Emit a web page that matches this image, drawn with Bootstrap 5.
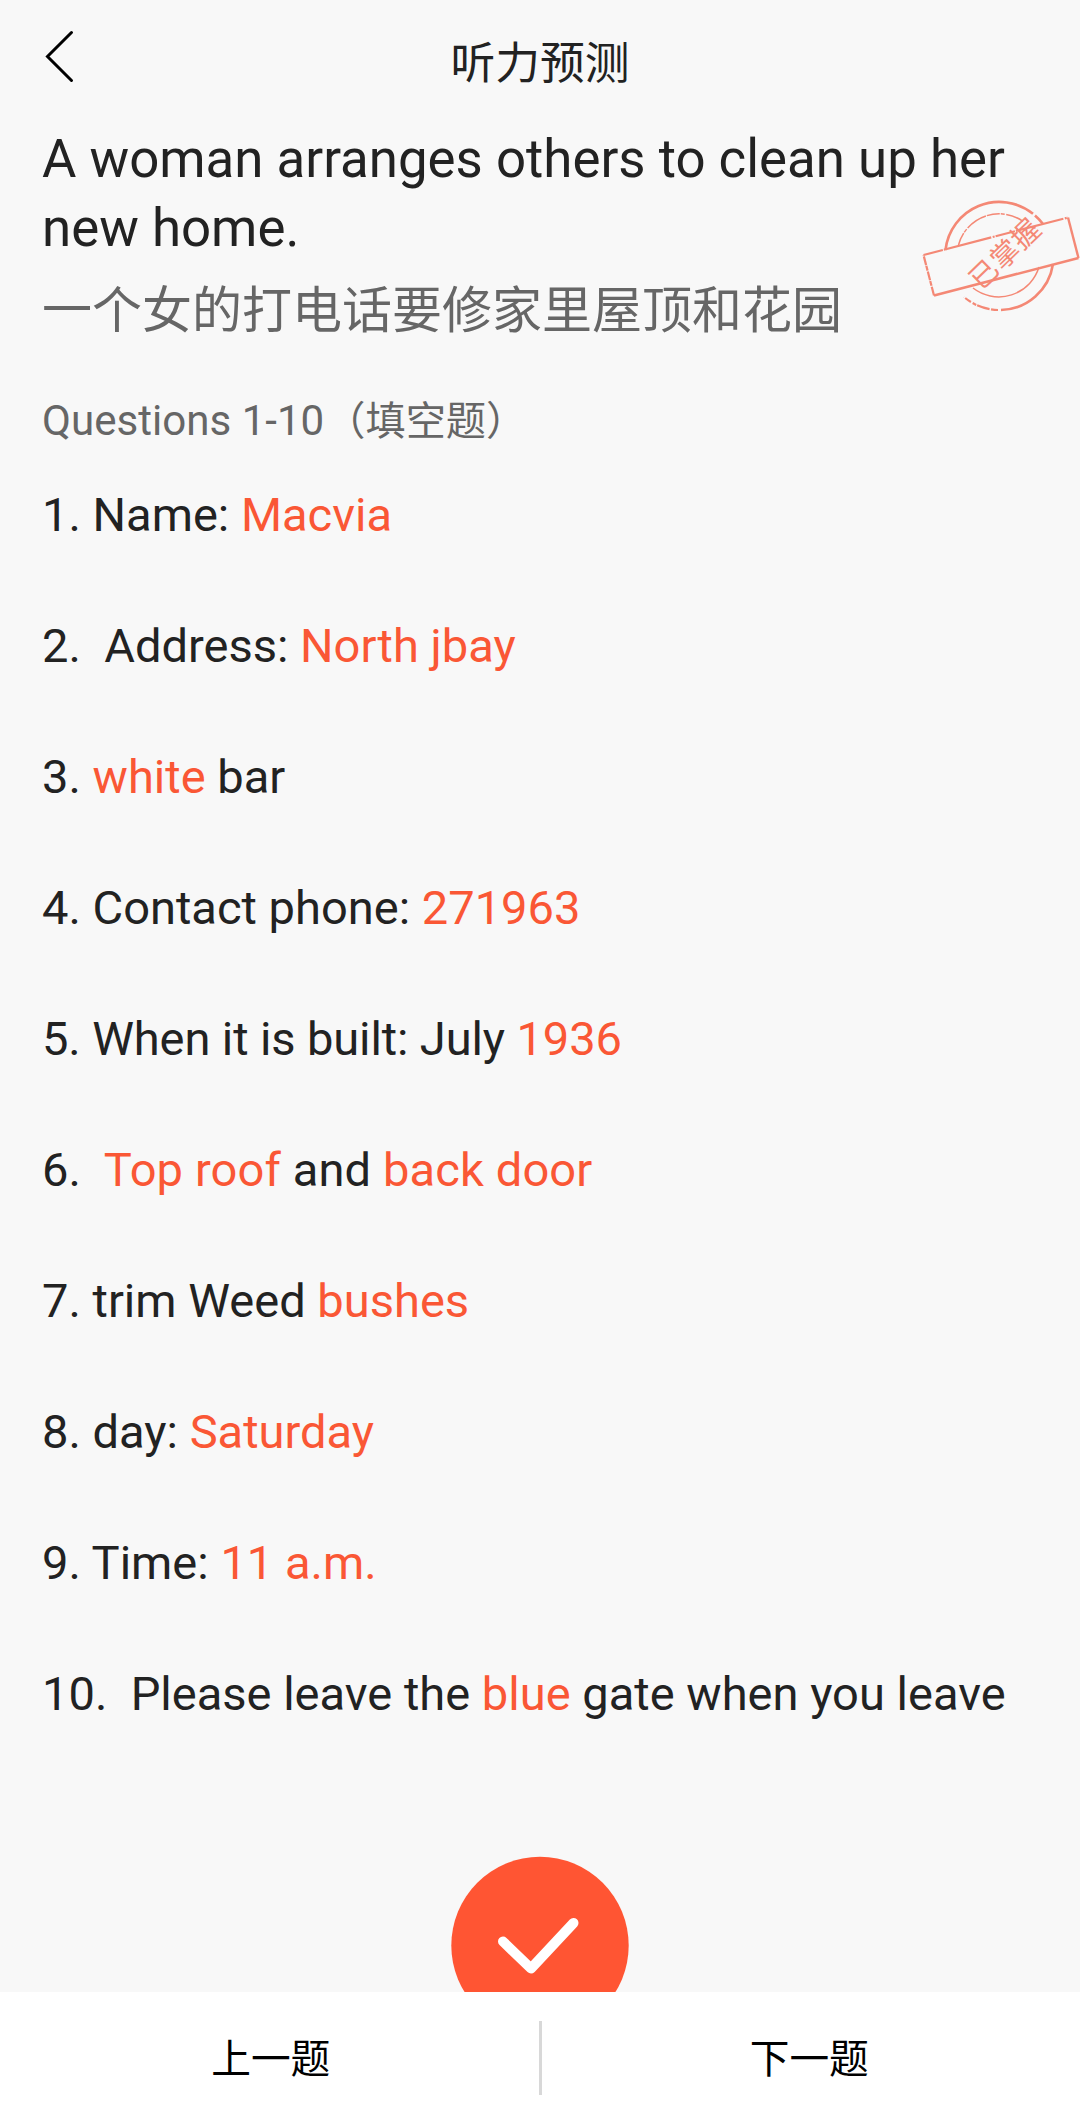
<!DOCTYPE html>
<html lang="zh-CN">
<head>
<meta charset="utf-8">
<meta name="viewport" content="width=device-width, initial-scale=1">
<title>听力预测</title>
<link href="https://cdn.jsdelivr.net/npm/bootstrap@5.3.0/dist/css/bootstrap.min.css" rel="stylesheet">
<style>
  body { font-family: Roboto, "Noto Sans CJK SC", sans-serif; background: #f8f8f8; color: #222; }
  .screen { height: 2123px; }
  .topbar { height: 125px; padding: 0 43px; }
  .topbar h1 { font-size: 44.8px; line-height: 66px; padding-top: 3px; }
  .back-btn { left: 43px; top: 29px; width: 34px; height: 56px; }
  .content-area { padding: 0 42px; }
  .topic-en { font-size: 52.8px; line-height: 69px; }
  .topic-zh { font-size: 50px; line-height: 72px; color: #666; margin-top: 12px; }
  .section-label { font-size: 42.1px; line-height: 60px; color: #666; margin-top: 44px; }
  .section-label .kind { font-size: 40.2px; margin-left: 1px; }
  .answers { margin-top: 31px; }
  .answers li { font-size: 47.05px; line-height: 64px; height: 131px; white-space: pre-wrap; }
  .answers .tight { letter-spacing: -.12px; }
  .answers .loose { letter-spacing: .12px; }
  .answers b { font-weight: 400; color: #fa5735; }
  .stamp { left: 920px; top: 196px; width: 160px; height: 120px; }
  .done-btn { width: 178px; height: 178px; top: 1856px; left: 451px; }
  .bottombar { height: 131px; font-size: 39.7px; }
  .bottombar a { color: #000; padding-top: 5px; }
  .bottombar .prev-link { padding-left: 3px; }
  .bottombar .next-link { padding-right: 3px; }
  .divider { width: 3px; height: 74px; background: #d8d8d8; }
</style>
</head>
<body>
<div class="screen position-relative overflow-hidden d-flex flex-column">
  <header class="topbar d-flex justify-content-center align-items-center flex-shrink-0">
    <a href="#" class="back-btn position-absolute d-block" aria-label="返回">
      <svg width="34" height="56" viewBox="0 0 34 56" fill="none" stroke="#000" stroke-width="3" stroke-linecap="round"><path d="M28.5 3.5 4.500 27.500 28.500 51.500"/></svg>
    </a>
    <h1 class="m-0 fw-normal">听力预测</h1>
  </header>

  <main class="content-area flex-grow-1">
    <h2 class="topic-en m-0 fw-normal">A woman arranges others to clean up her new home.</h2>
    <p class="topic-zh mb-0">一个女的打电话要修家里屋顶和花园</p>
    <p class="section-label mb-0">Questions 1-10<span class="kind">（填空题）</span></p>
    <ul class="answers list-unstyled mb-0">
      <li>1. Name: <b>Macvia</b></li>
      <li>2.  Address: <b>North jbay</b></li>
      <li>3. <b>white</b> bar</li>
      <li>4. Contact phone: <b>271963</b></li>
      <li class="tight">5. When it is built: July <b>1936</b></li>
      <li class="loose">6.  <b>Top roof</b> and <b>back door</b></li>
      <li>7. trim Weed <b>bushes</b></li>
      <li>8. day: <b>Saturday</b></li>
      <li>9. Time: <b>11 a.m.</b></li>
      <li>10.  Please leave the <b>blue</b> gate when you leave</li>
    </ul>
  </main>

  <svg class="stamp position-absolute" viewBox="0 0 160 120" fill="none" stroke="#f48875">
    <g stroke-width="2.600">
      <path d="M25.500 54A54 54 0 0 1 113 17.800"/>
      <path d="M115 19.400A54 54 0 0 1 123 28"/>
      <path d="M133 68A54 54 0 0 1 81 114"/>
      <path d="M78 114A54 54 0 0 1 44 101" stroke-width="2.200" stroke-dasharray="7 1.500 13 1 4 2"/>
    </g>
    <g stroke-width="1.500">
      <path d="M38.500 49A42 42 0 0 1 103 25.300" stroke-dasharray="13 1 4 1.500 22 1"/>
      <path d="M119 71A42 42 0 0 1 53 92"/>
    </g>
    <path d="M3.500 59 148 21.500" stroke-width="2.200" stroke-dasharray="20 1 49 1.500 2 1"/>
    <path d="M148 21.500 158.500 62" stroke-width="2.400"/>
    <path d="M158.500 62 14 99.500" stroke-width="2.600"/>
    <path d="M14 99.500 3.500 59" stroke-width="2.200" stroke-dasharray="9 1 5 .700"/>
    <text transform="translate(85.500 58) rotate(-44)" text-anchor="middle" y="9.500" font-size="28" letter-spacing="1" fill="#f48875" stroke="none">已掌握</text>
  </svg>

  <a href="#" class="done-btn position-absolute d-block" aria-label="已掌握">
    <svg width="178" height="178" viewBox="0 0 178 178"><circle cx="89" cy="89.500" r="88.700" fill="#ff5533"/><path d="M52 85.500 80 112.500 122.500 67" fill="none" stroke="#fff" stroke-width="10" stroke-linecap="round" stroke-linejoin="round"/></svg>
  </a>

  <footer class="bottombar bg-white position-relative d-flex align-items-center justify-content-center flex-shrink-0">
    <a href="#" class="prev-link flex-fill text-center text-decoration-none">上一题</a>
    <span class="divider"></span>
    <a href="#" class="next-link flex-fill text-center text-decoration-none">下一题</a>
  </footer>
</div>
<script src="https://cdn.jsdelivr.net/npm/bootstrap@5.3.0/dist/js/bootstrap.bundle.min.js"></script>
</body>
</html>
